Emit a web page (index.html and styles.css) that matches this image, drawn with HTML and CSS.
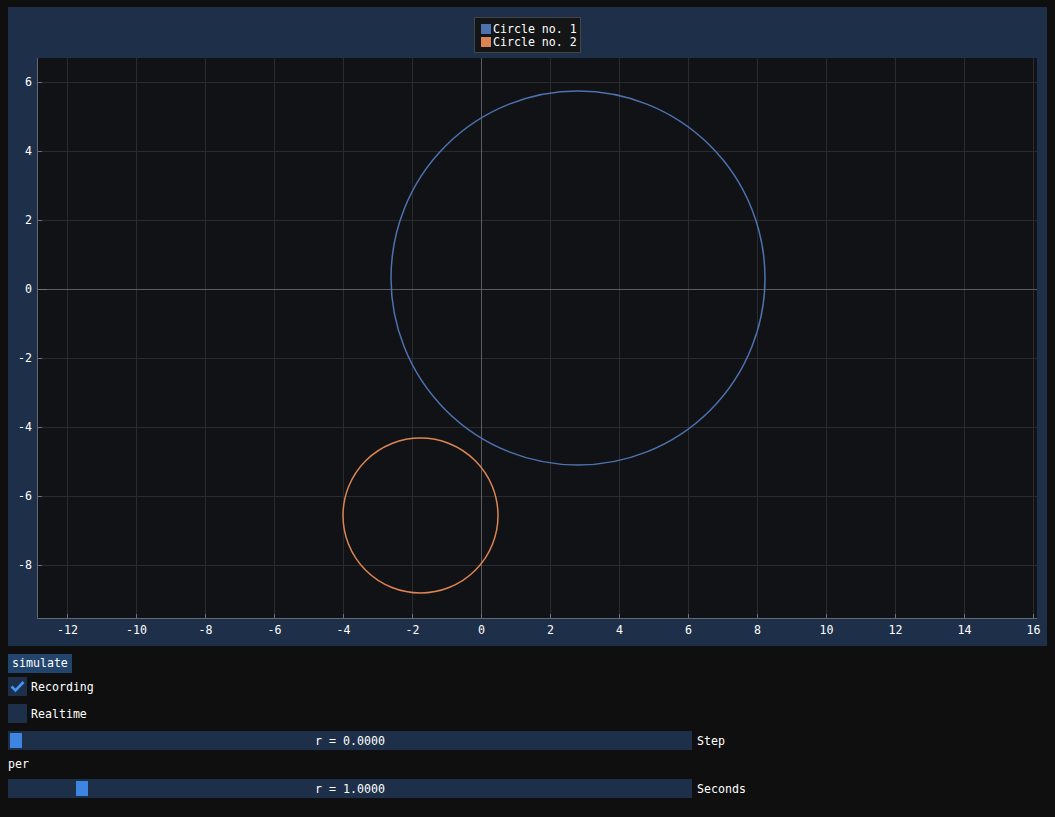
FILE: index.html
```html
<!DOCTYPE html>
<html>
<head>
<meta charset="utf-8">
<link rel="stylesheet" href="styles.css">
</head>
<body>
<div class="window">
  <div class="plot-frame">
    <svg class="plot" width="1039" height="639" viewBox="8 7 1039 639">
      <rect x="37" y="58" width="1000" height="560" class="plot-bg"/>
      <g class="grid">
        <line x1="67.5" y1="58" x2="67.5" y2="618"/>
        <line x1="136.5" y1="58" x2="136.5" y2="618"/>
        <line x1="205.5" y1="58" x2="205.5" y2="618"/>
        <line x1="274.5" y1="58" x2="274.5" y2="618"/>
        <line x1="343.5" y1="58" x2="343.5" y2="618"/>
        <line x1="412.5" y1="58" x2="412.5" y2="618"/>
        <line x1="550.5" y1="58" x2="550.5" y2="618"/>
        <line x1="619.5" y1="58" x2="619.5" y2="618"/>
        <line x1="688.5" y1="58" x2="688.5" y2="618"/>
        <line x1="757.5" y1="58" x2="757.5" y2="618"/>
        <line x1="826.5" y1="58" x2="826.5" y2="618"/>
        <line x1="895.5" y1="58" x2="895.5" y2="618"/>
        <line x1="964.5" y1="58" x2="964.5" y2="618"/>
        <line x1="1033.5" y1="58" x2="1033.5" y2="618"/>
        <line x1="37" y1="82.5" x2="1037" y2="82.5"/>
        <line x1="37" y1="151.5" x2="1037" y2="151.5"/>
        <line x1="37" y1="220.5" x2="1037" y2="220.5"/>
        <line x1="37" y1="358.5" x2="1037" y2="358.5"/>
        <line x1="37" y1="427.5" x2="1037" y2="427.5"/>
        <line x1="37" y1="496.5" x2="1037" y2="496.5"/>
        <line x1="37" y1="565.5" x2="1037" y2="565.5"/>
      </g>
      <g class="zero">
        <line x1="481.5" y1="58" x2="481.5" y2="618"/>
        <line x1="37" y1="289.5" x2="1037" y2="289.5"/>
      </g>
      <g class="axis">
        <line x1="37.5" y1="58" x2="37.5" y2="619"/>
        <line x1="37" y1="618.5" x2="1037" y2="618.5"/>
      </g>
      <g class="ticks">
        <line x1="67.5" y1="614" x2="67.5" y2="618"/>
        <line x1="136.5" y1="614" x2="136.5" y2="618"/>
        <line x1="205.5" y1="614" x2="205.5" y2="618"/>
        <line x1="274.5" y1="614" x2="274.5" y2="618"/>
        <line x1="343.5" y1="614" x2="343.5" y2="618"/>
        <line x1="412.5" y1="614" x2="412.5" y2="618"/>
        <line x1="481.5" y1="614" x2="481.5" y2="618"/>
        <line x1="550.5" y1="614" x2="550.5" y2="618"/>
        <line x1="619.5" y1="614" x2="619.5" y2="618"/>
        <line x1="688.5" y1="614" x2="688.5" y2="618"/>
        <line x1="757.5" y1="614" x2="757.5" y2="618"/>
        <line x1="826.5" y1="614" x2="826.5" y2="618"/>
        <line x1="895.5" y1="614" x2="895.5" y2="618"/>
        <line x1="964.5" y1="614" x2="964.5" y2="618"/>
        <line x1="1033.5" y1="614" x2="1033.5" y2="618"/>
        <line x1="38" y1="82.5" x2="42" y2="82.5"/>
        <line x1="38" y1="151.5" x2="42" y2="151.5"/>
        <line x1="38" y1="220.5" x2="42" y2="220.5"/>
        <line x1="38" y1="289.5" x2="47" y2="289.5"/>
        <line x1="38" y1="358.5" x2="42" y2="358.5"/>
        <line x1="38" y1="427.5" x2="42" y2="427.5"/>
        <line x1="38" y1="496.5" x2="42" y2="496.5"/>
        <line x1="38" y1="565.5" x2="42" y2="565.5"/>
      </g>
      <circle cx="578" cy="278" r="187" class="c1"/>
      <circle cx="420.5" cy="515.5" r="77.5" class="c2"/>
      <g class="xlabels">
        <text x="67.5" y="634">-12</text>
        <text x="136.5" y="634">-10</text>
        <text x="205.5" y="634">-8</text>
        <text x="274.5" y="634">-6</text>
        <text x="343.5" y="634">-4</text>
        <text x="412.5" y="634">-2</text>
        <text x="481.5" y="634">0</text>
        <text x="550.5" y="634">2</text>
        <text x="619.5" y="634">4</text>
        <text x="688.5" y="634">6</text>
        <text x="757.5" y="634">8</text>
        <text x="826.5" y="634">10</text>
        <text x="895.5" y="634">12</text>
        <text x="964.5" y="634">14</text>
        <text x="1033.5" y="634">16</text>
      </g>
      <g class="ylabels">
        <text x="32" y="86">6</text>
        <text x="32" y="155">4</text>
        <text x="32" y="224">2</text>
        <text x="32" y="293">0</text>
        <text x="32" y="362">-2</text>
        <text x="32" y="431">-4</text>
        <text x="32" y="500">-6</text>
        <text x="32" y="569">-8</text>
      </g>
      <g class="legend">
        <rect x="474.5" y="17.5" width="106" height="35" class="legend-box"/>
        <rect x="481" y="24" width="10" height="10" class="sw1"/>
        <rect x="481" y="37" width="10" height="10" class="sw2"/>
        <text x="493" y="33">Circle no. 1</text>
        <text x="493" y="46">Circle no. 2</text>
      </g>
    </svg>
  </div>

  <div class="controls">
    <div class="button">simulate</div>
    <div class="row check-row first">
      <div class="checkbox">
        <svg width="19" height="19" viewBox="0 0 19 19"><polyline points="3.5,9.5 7.5,13.5 15.5,5" class="tick"/></svg>
      </div>
      <span class="label">Recording</span>
    </div>
    <div class="row check-row">
      <div class="checkbox"></div>
      <span class="label">Realtime</span>
    </div>
    <div class="row slider-row">
      <div class="slider">
        <div class="grab" style="left:2px"></div>
        <span class="slider-text">r = 0.0000</span>
      </div>
      <span class="label">Step</span>
    </div>
    <div class="row text-row">per</div>
    <div class="row slider-row second">
      <div class="slider">
        <div class="grab" style="left:68px"></div>
        <span class="slider-text">r = 1.0000</span>
      </div>
      <span class="label">Seconds</span>
    </div>
  </div>
</div>
</body>
</html>
```

FILE: styles.css
```css
html, body {
  margin: 0;
  padding: 0;
  background: #0f0f0f;
  color: #ffffff;
  font-family: "DejaVu Sans Mono", "Liberation Mono", monospace;
  font-size: 11.6px;
}

.window {
  padding: 7px 8px;
  display: flex;
  flex-direction: column;
}

.plot-frame {
  width: 1039px;
  height: 639px;
  background: #1d2f49;
}

.plot {
  display: block;
}

.plot-bg {
  fill: #111215;
}

.grid line {
  stroke: #2a2b2f;
  stroke-width: 1;
}

.zero line {
  stroke: #5a5b5e;
  stroke-width: 1;
}

.axis line {
  stroke: #5f6675;
  stroke-width: 1;
}

.ticks line {
  stroke: #6e727c;
  stroke-width: 1;
}

.c1 {
  fill: none;
  stroke: #4c72b0;
  stroke-width: 1.5;
}

.c2 {
  fill: none;
  stroke: #dd8452;
  stroke-width: 1.5;
}

.xlabels text {
  fill: #ffffff;
  text-anchor: middle;
  font-size: 11.6px;
}

.ylabels text {
  fill: #ffffff;
  text-anchor: end;
  font-size: 11.6px;
}

.legend-box {
  fill: #141517;
  stroke: #454545;
  stroke-width: 1;
}

.sw1 { fill: #4c72b0; }
.sw2 { fill: #dd8452; }

.legend text {
  fill: #ffffff;
  font-size: 11.6px;
}

.controls {
  display: flex;
  flex-direction: column;
  margin-top: 8px;
}

.button {
  width: 64px;
  height: 19px;
  line-height: 19px;
  background: #23456d;
  padding-left: 4px;
  box-sizing: border-box;
}

.row {
  display: flex;
  align-items: center;
  gap: 4px;
  height: 19px;
}

.check-row {
  margin-top: 8px;
}

.check-row.first {
  margin-top: 4px;
}

.checkbox {
  width: 19px;
  height: 19px;
  background: #1d2f49;
}

.checkbox svg {
  display: block;
}

.tick {
  fill: none;
  stroke: #4296fa;
  stroke-width: 2.6;
  stroke-linecap: butt;
  stroke-linejoin: miter;
}

.slider-row {
  margin-top: 8px;
  gap: 5px;
}

.slider {
  position: relative;
  width: 684px;
  height: 19px;
  background: #1d2f49;
  display: flex;
  align-items: center;
  justify-content: center;
}

.grab {
  position: absolute;
  top: 2px;
  width: 12px;
  height: 15px;
  background: #3d85e0;
}

.slider-text {
  position: relative;
}

.text-row {
  margin-top: 4px;
  height: 19px;
}

.slider-row.second {
  margin-top: 6px;
}
```
